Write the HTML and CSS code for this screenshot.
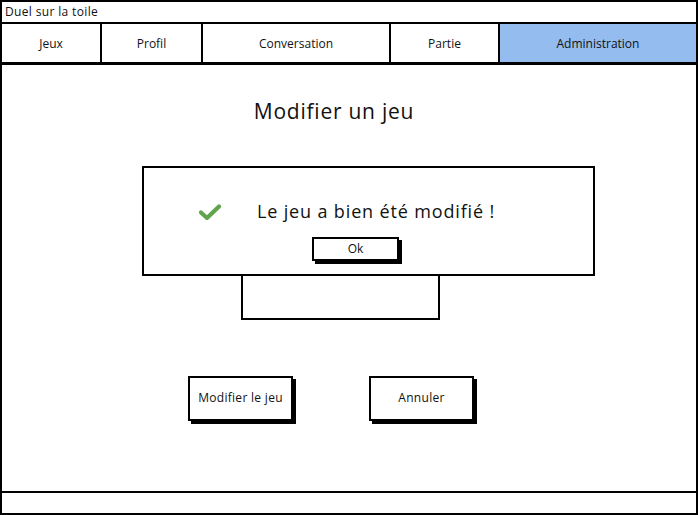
FILE: index.html
```html
<!DOCTYPE html>
<html lang="fr">
<head>
<meta charset="utf-8">
<title>Duel sur la toile</title>
<link rel="stylesheet" href="styles.css">
</head>
<body>
<div class="window">
  <div class="titlebar">Duel sur la toile</div>
  <div class="tabs">
    <div class="tab t-jeux">Jeux</div>
    <div class="tab t-profil">Profil</div>
    <div class="tab t-conv">Conversation</div>
    <div class="tab t-partie">Partie</div>
    <div class="tab t-admin active">Administration</div>
  </div>
  <div class="main">
    <h1 class="heading">Modifier un jeu</h1>
    <div class="dialog">
      <div class="msg-row">
        <svg class="check" width="22" height="16" viewBox="0 0 22 16"><path d="M2 8.5 L8 14 L20 2.5" fill="none" stroke="#62a44b" stroke-width="4.2" stroke-linecap="round" stroke-linejoin="round"/></svg>
        <span class="msg">Le jeu a bien été modifié !</span>
      </div>
      <div class="ok-row"><button class="ok">Ok</button></div>
    </div>
    <div class="under"></div>
    <div class="actions">
      <button class="btn">Modifier le jeu</button>
      <button class="btn">Annuler</button>
    </div>
  </div>
  <div class="footer"></div>
</div>
</body>
</html>
```
FILE: styles.css
```css
* { box-sizing: border-box; }
html, body { margin: 0; padding: 0; background: #fff; }
body { font-family: "Open Sans", "Lato", sans-serif; color: #111; }

.window {
  width: 698px;
  height: 515px;
  border: 2px solid #000;
  display: flex;
  flex-direction: column;
}

.titlebar {
  flex-shrink: 0;
  height: 22px;
  border-bottom: 2px solid #000;
  font-size: 12px;
  letter-spacing: 0.35px;
  line-height: 20px;
  padding-left: 3px;
}

.tabs {
  flex-shrink: 0;
  height: 41px;
  display: flex;
  border-bottom: 3px solid #000;
}
.tab {
  display: flex;
  align-items: center;
  justify-content: center;
  font-size: 12px;
  border-left: 2px solid #000;
  padding-top: 1px;
}
.tab:first-child { border-left: none; }
.t-jeux { width: 98px; }
.t-profil { width: 101px; }
.t-conv { width: 188px; }
.t-partie { width: 109px; }
.t-admin { flex: 1; }
.tab.active { background: #94bcef; }

.main {
  flex: 1;
  display: flex;
  flex-direction: column;
}

.heading {
  margin: 32px 0 0 0;
  font-size: 21px;
  letter-spacing: 0.75px;
  font-weight: 400;
  line-height: 28px;
  text-align: center;
  padding-right: 30px;
}

.dialog {
  margin: 41px 0 0 140px;
  width: 453px;
  height: 110px;
  border: 2px solid #000;
  display: flex;
  flex-direction: column;
}
.msg-row {
  display: flex;
  align-items: center;
  margin-top: 30px;
  height: 26px;
}
.check { margin-left: 55px; margin-top: 2px; }
.msg {
  margin-left: 36px;
  font-size: 18px;
  letter-spacing: 0.85px;
}
.ok-row { margin-top: 12px; padding-left: 168px; }
.ok {
  width: 87px;
  height: 24px;
  border: 2px solid #000;
  background: #fff;
  box-shadow: 3px 3px 0 #000;
  font-family: inherit;
  font-size: 12px;
  padding: 0;
  color: #111;
}

.under {
  margin-left: 239px;
  width: 199px;
  height: 44px;
  border: 2px solid #000;
  border-top: none;
}

.actions {
  display: flex;
  gap: 76px;
  margin: 56px 0 0 186px;
}
.btn {
  width: 105px;
  height: 45px;
  border: 2px solid #000;
  background: #fff;
  box-shadow: 3px 3px 0 #000;
  font-family: inherit;
  font-size: 12px;
  letter-spacing: 0.3px;
  color: #111;
  padding: 0 0 2px 0;
}

.footer {
  flex-shrink: 0;
  height: 22px;
  border-top: 2px solid #000;
  margin-top: auto;
}
```
